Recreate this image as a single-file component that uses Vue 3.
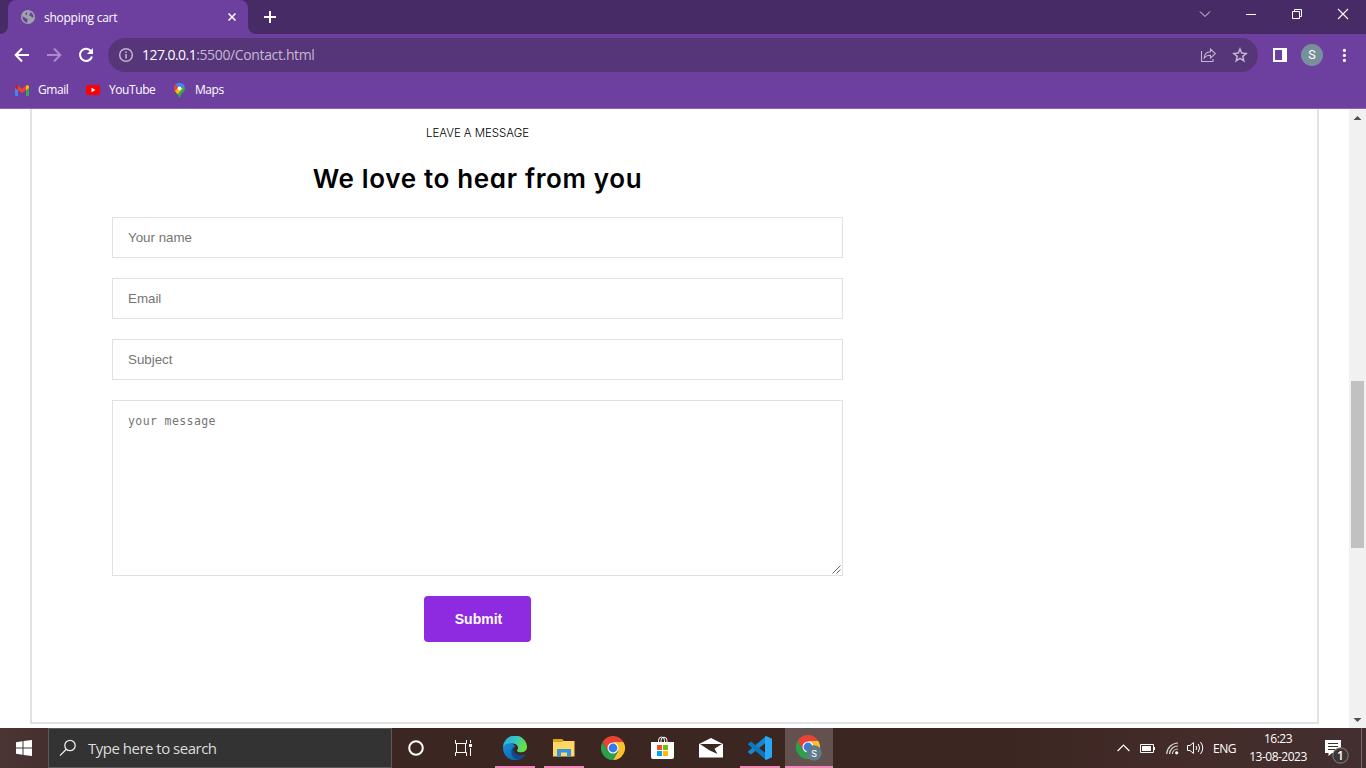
<script setup>
const fields = ['Your name', 'Email', 'Subject']
</script>

<template>
  <div class="screen">
    <header class="chrome">
      <div class="tabstrip">
        <div class="tab">
          <svg class="globe" width="14" height="14" viewBox="0 0 14 14">
            <circle cx="7" cy="7" r="7" fill="#9da4aa" />
            <path d="M1.5 6.2 5 8.2 6.6 9.3 6.2 12.6C3.4 12.2 1.2 9.6 1.5 6.2ZM6.6 1.6 9 1.4 9.8 2.6 8.6 4 8 5.4 9.8 6 11 7.6 12.6 7.2C12.6 4.6 11 2 8 1.4ZM4.2 3.4 6.2 2 6 4.4 5 5.6Z" fill="#6d40a0" />
          </svg>
          <span class="tab-title">shopping cart</span>
          <svg class="tab-close" width="8" height="8" viewBox="0 0 8 8"><path d="M.5.5 7.5 7.5M7.5.5.5 7.5" stroke="#fff" stroke-width="1.5" /></svg>
          <svg class="tab-foot" width="8" height="8" viewBox="0 0 8 8"><path d="M0 0A8 8 0 0 0 8 8H0Z" fill="#6d40a0" /></svg>
          <svg class="tab-foot left" width="8" height="8" viewBox="0 0 8 8"><path d="M8 0A8 8 0 0 1 0 8H8Z" fill="#6d40a0" /></svg>
        </div>
        <svg class="plus" width="12" height="12" viewBox="0 0 12 12"><path d="M6 0V12M0 6H12" stroke="#fff" stroke-width="2" /></svg>
        <div class="window-buttons">
          <svg width="46" height="28" viewBox="0 0 46 28"><path d="M18 11.5 23 16.5 28 11.5" fill="none" stroke="#e4deea" stroke-width="1" /></svg>
          <svg width="46" height="28" viewBox="0 0 46 28"><path d="M18 14.5H28" stroke="#fff" /></svg>
          <svg width="46" height="28" viewBox="0 0 46 28"><path d="M18.5 11.5H25.5V18.5H18.5ZM20.5 11.500V9.500H27.5V16.500H25.5" fill="none" stroke="#fff" /></svg>
          <svg width="46" height="28" viewBox="0 0 46 28"><path d="M18 9 28 19M28 9 18 19" stroke="#fff" stroke-width="1.1" /></svg>
        </div>
      </div>

      <div class="toolbar">
        <svg class="nav" width="16" height="16" viewBox="0 0 16 16"><path d="M15 8H2M8 1.500 1.700 8 8 14.500" fill="none" stroke="#fff" stroke-width="2" /></svg>
        <svg class="nav" width="16" height="16" viewBox="0 0 16 16"><path d="M1 8H14M8 1.500 14.300 8 8 14.500" fill="none" stroke="#a98bcb" stroke-width="2" /></svg>
        <svg class="nav" width="16" height="16" viewBox="0 0 16 16"><path d="M13.200 4.400A6.100 6.100 0 1 0 14 9.500" fill="none" stroke="#fff" stroke-width="2" /><path d="M15 1V7H9Z" fill="#fff" /></svg>
        <div class="omnibox">
          <svg width="16" height="16" viewBox="0 0 16 16"><circle cx="8" cy="8" r="6.300" fill="none" stroke="#c3b5d2" stroke-width="1.500" /><path d="M8 7V11.500M8 4.400V6" stroke="#c3b5d2" stroke-width="1.600" /></svg>
          <div class="url"><b>127.0.0.1</b>:5500/Contact.html</div>
          <svg class="share" width="16" height="16" viewBox="0 0 16 16"><path d="M1.500 4V14.500H13V12M4.200 11C4.500 7 6.500 5 10.500 4.800V2L15.300 6.600 10.500 11V8.300C7.500 8.200 5.700 9 4.200 11Z" fill="none" stroke="#c3b5d2" stroke-width="1.100" /></svg>
          <svg width="16" height="16" viewBox="0 0 16 16"><path d="M8 2 9.700 6.100 14.200 6.500 10.800 9.400 11.800 13.800 8 11.400 4.200 13.800 5.200 9.400 1.800 6.500 6.300 6.100Z" fill="none" stroke="#c3b5d2" stroke-width="1.500" /></svg>
        </div>
        <svg class="panel" width="14" height="14" viewBox="0 0 14 14"><path d="M0 0H14V14H0ZM2 2V12H9V2Z" fill="#fff" fill-rule="evenodd" /></svg>
        <div class="avatar">S</div>
        <svg class="more" width="4" height="14" viewBox="0 0 4 14"><circle cx="2.400" cy="2.400" r="1.600" fill="#fff" /><circle cx="2.400" cy="7.400" r="1.600" fill="#fff" /><circle cx="2.400" cy="12.400" r="1.600" fill="#fff" /></svg>
      </div>

      <nav class="bookmarks">
        <svg width="14" height="11" viewBox="0 0 14 11">
          <path d="M0 2H3V11H1Q0 11 0 10Z" fill="#4285f4" /><path d="M11 2H14V10Q14 11 13 11H11Z" fill="#34a853" />
          <path d="M0 3V1.600Q.700-.500 3 .600L3 5Z" fill="#c5221f" /><path d="M3 .600 7 3.700 11 .600V5L7 8 3 5Z" fill="#ea4335" /><path d="M11 .600Q13.500-.500 14 1.600V3L11 5Z" fill="#fbbc04" />
        </svg>
        <span class="gm">Gmail</span>
        <svg width="14" height="10" viewBox="0 0 14 10"><rect width="14" height="10" rx="2.200" fill="#f00" /><path d="M5.500 2.800 9.400 5 5.500 7.200Z" fill="#fff" /></svg>
        <span class="yt">YouTube</span>
        <svg width="11" height="15" viewBox="0 0 11 15">
          <clipPath id="pin"><path d="M5.500 0A5.400 5.400 0 0 0 0 5.400C0 8.500 3.800 9.500 4.800 14Q5.500 15.500 6.200 14C7.200 9.500 11 8.500 11 5.400A5.400 5.400 0 0 0 5.500 0Z" /></clipPath>
          <g clip-path="url(#pin)"><rect width="11" height="15" fill="#34a853" /><path d="M0 0H11V3L5 7 0 3Z" fill="#4285f4" /><path d="M0 0 5 5 0 10Z" fill="#ea4335" /><path d="M0 9 5 4 9 5 3 12Z" fill="#fbbc04" /><path d="M2 0H11V3L6 6Z" fill="#4285f4" /></g>
          <circle cx="5.500" cy="5.400" r="1.900" fill="#fff" />
        </svg>
        <span class="mp">Maps</span>
      </nav>
    </header>

    <div class="viewport">
      <main class="page">
        <section class="panel-box">
          <form class="form" @submit.prevent>
            <span class="eyebrow">LEAVE A MESSAGE</span>
            <h2>We love to hear from you</h2>
            <input v-for="f in fields" :key="f" type="text" :placeholder="f" />
            <div class="message">
              <span>your message</span>
              <svg width="9" height="9" viewBox="0 0 9 9"><path d="M.500 8.500 8.500.500M4.500 8.500 8.500 4.500" stroke="#555" stroke-width=".9" /></svg>
            </div>
            <button>Submit</button>
          </form>
        </section>
      </main>
      <aside class="scrollbar">
        <svg width="17" height="17" viewBox="0 0 17 17"><path d="M4.500 11 8.500 7 12.500 11Z" fill="#505050" /></svg>
        <div class="thumb"></div>
        <svg width="17" height="17" viewBox="0 0 17 17"><path d="M4.500 6 8.500 10 12.500 6Z" fill="#505050" /></svg>
      </aside>
    </div>

    <footer class="taskbar">
      <div class="start">
        <svg width="16" height="16" viewBox="0 0 16 16"><path d="M0 2.200 6.500 1.300V7.500H0ZM7.500 1.100 16 0V7.500H7.500ZM0 8.500H6.500V14.700L0 13.800ZM7.500 8.500H16V16L7.500 14.900Z" fill="#fff" /></svg>
      </div>
      <div class="search">
        <svg width="18" height="18" viewBox="0 0 18 18"><circle cx="11" cy="6.500" r="5.200" fill="none" stroke="#eee" stroke-width="1.300" /><path d="M7.300 10.300 1 16.600" stroke="#eee" stroke-width="1.300" /></svg>
        <span>Type here to search</span>
      </div>

      <div class="item"><svg width="16" height="16" viewBox="0 0 16 16"><circle cx="8" cy="8" r="6.800" fill="none" stroke="#fff" stroke-width="2" /></svg></div>
      <div class="item tasks"><svg width="17" height="16" viewBox="0 0 17 16"><path d="M.500 0V3.500H11.500V0M.500 16V12.500H11.500V16M1.500 4V12M10.500 4V12M15.500 0V3M15.500 8V16" fill="none" stroke="#fff" /><path d="M14 4H17V7H14Z" fill="#fff" /></svg></div>
      <div class="item open">
        <svg width="24" height="24" viewBox="0 0 24 24">
          <defs>
            <linearGradient id="ea" x1="0" y1="0" x2="1" y2=".3"><stop offset="0" stop-color="#2aa6df" /><stop offset=".5" stop-color="#32c4cd" /><stop offset="1" stop-color="#68df45" /></linearGradient>
            <linearGradient id="eb" x1="0" y1="0" x2="1" y2="1"><stop offset="0" stop-color="#1590d8" /><stop offset="1" stop-color="#0c59a4" /></linearGradient>
          </defs>
          <path d="M0 12A12 12 0 0 1 24 11C24 15 20.500 16.500 17 16.300 14 16.100 13.600 14.600 14.500 13.500 16 11.500 14.500 8 10 7.500 5 7.200 1.500 9 0 12Z" fill="url(#ea)" />
          <path d="M0 12C1 8.500 5.500 7 9.500 8 12.500 8.800 12 11 11 11.500 9.500 12.500 9.500 17 14 19 17 20.300 20 19.500 22.500 18A12 12 0 0 1 0 12Z" fill="url(#eb)" />
          <path d="M11 11C6.500 13 7.500 22 15 23.600 18.500 22.800 21 21 22.500 18 18 20.500 11 19 10.700 14Q10.600 12 11 11Z" fill="#114a8b" />
        </svg>
      </div>
      <div class="item open">
        <svg width="22" height="18" viewBox="0 0 22 18"><path d="M0 0H9L10.500 2H21.500V17.500H0Z" fill="#ffd765" /><path d="M0 0H9L10.500 2 9 3H0Z" fill="#e4a11b" /><path d="M4 17.500V10H18V17.500H14V13.500H8V17.500Z" fill="#3695dc" /></svg>
      </div>
      <div class="item">
        <svg width="24" height="24" viewBox="0 0 24 24"><path d="M1.600 6A12 12 0 0 1 22.400 6H12L6.800 15Z" fill="#ea4335" /><path d="M22.400 6A12 12 0 0 1 12 24L17.200 15 12 6Z" fill="#fbc02d" /><path d="M1.600 6 6.800 15H17.200L12 24A12 12 0 0 1 1.600 6Z" fill="#28a14a" /><circle cx="12" cy="12" r="5.500" fill="#fff" /><circle cx="12" cy="12" r="4.400" fill="#3b78e7" /></svg>
      </div>
      <div class="item">
        <svg width="23" height="24" viewBox="0 0 23 24"><path d="M7.500 7V4.500Q7.500 1 10.500 1Q13.500 1 13.500 4.500V7M10 7V4.500Q10 1.200 13 1.200Q16 1.200 16 4.500V7" fill="none" stroke="#fff" /><path d="M0 6H23V21Q23 23 21 23H2Q0 23 0 21Z" fill="#fff" /><path d="M6 9H11V14H6Z" fill="#f25022" /><path d="M12 9H17V14H12Z" fill="#7fba00" /><path d="M6 15H11V20H6Z" fill="#00a4ef" /><path d="M12 15H17V20H12Z" fill="#ffb900" /></svg>
      </div>
      <div class="item">
        <svg width="24" height="20" viewBox="0 0 24 20"><path d="M0 6 12 0 24 6V19.500H0Z" fill="#fff" /><path d="M1 6H23L15.500 10.700 18.500 16 10.300 12.300Z" fill="#3d2723" /></svg>
      </div>
      <div class="item open">
        <svg width="24" height="24" viewBox="0 0 24 24"><path d="M18 0V6.500L3 18.500 0 16.200V15.500Z" fill="#1688cf" /><path d="M18 24V17.500L3 5.500 0 7.800V8.500Z" fill="#0d77be" /><path d="M18 0 24 2.800V21.200L18 24 17 23V1Z" fill="#2aa7f2" /></svg>
      </div>
      <div class="item open active">
        <svg width="26" height="26" viewBox="0 0 26 26"><path d="M1.600 6A12 12 0 0 1 22.400 6H12L6.800 15Z" fill="#ea4335" /><path d="M22.400 6A12 12 0 0 1 12 24L17.200 15 12 6Z" fill="#fbc02d" /><path d="M1.600 6 6.800 15H17.200L12 24A12 12 0 0 1 1.600 6Z" fill="#28a14a" /><circle cx="12" cy="12" r="5.500" fill="#fff" /><circle cx="12" cy="12" r="4.400" fill="#3b78e7" /><circle cx="18" cy="18" r="7.700" fill="#607a87" /><text x="18" y="21.500" text-anchor="middle" font-family="Roboto, sans-serif" font-size="9.500" fill="#fff">S</text></svg>
      </div>

      <div class="tray">
        <svg width="13" height="8" viewBox="0 0 13 8"><path d="M.600 7 6.500 1.100 12.400 7" fill="none" stroke="#fff" stroke-width="1.200" /></svg>
        <svg class="battery" width="15" height="9" viewBox="0 0 15 9"><path d="M.500.500H13.500V8.500H.500ZM14.500 3V6" fill="none" stroke="#fff" /><path d="M2 2H11V7H2Z" fill="#fff" /></svg>
        <svg class="wifi" width="13" height="13" viewBox="0 0 13 13"><path d="M.700 12A11.500 11.500 0 0 1 12 1M3.500 12A8.500 8.500 0 0 1 12 4M6.300 12A5.600 5.600 0 0 1 12 7" fill="none" stroke="#d8d2d0" stroke-width="1.200" /><circle cx="10.700" cy="10.800" r="1.600" fill="#fff" /></svg>
        <svg class="volume" width="17" height="14" viewBox="0 0 17 14"><path d="M.500 4.500H3L6.500 1.500V12.500L3 9.500H.500Z" fill="none" stroke="#fff" /><path d="M9 5Q10.500 7 9 9M11.200 3Q14 7 11.200 11M13.500 1Q18 7 13.500 13" fill="none" stroke="#fff" /></svg>
        <span class="lang">ENG</span>
        <div class="clock"><span>16:23</span><span>13-08-2023</span></div>
        <div class="notice">
          <svg width="26" height="26" viewBox="0 0 26 26"><path d="M0 1H16V14H7L3.500 17V14H0Z" fill="#fff" /><path d="M3 4.500H13M3 7.500H13M3 10.500H10" stroke="#3e2c2b" /><circle cx="15.500" cy="16.500" r="7.700" fill="#3c3634" stroke="#8c8583" /><text x="15.500" y="20.700" text-anchor="middle" font-family="Open Sans, sans-serif" font-size="12" font-weight="600" fill="#fff">1</text></svg>
        </div>
      </div>
    </footer>
  </div>
</template>

<style>
body { margin: 0; overflow: hidden; }
</style>

<style scoped>
* { box-sizing: border-box; }
svg { display: block; flex: none; }
.screen { width: 1366px; height: 768px; display: flex; flex-direction: column; overflow: hidden; background: #fff; font-family: "Open Sans", "Noto Sans", sans-serif; }
.chrome { height: 109px; background: #6d40a0; border-bottom: 1px solid #8c67b4; color: #fff; }
.tabstrip { height: 34px; background: #472b66; display: flex; align-items: center; padding-left: 8px; }
.tab { position: relative; width: 240px; height: 34px; background: #6d40a0; border-radius: 8px 8px 0 0; display: flex; align-items: center; padding: 0 12px 0 13px; }
.tab-title { margin-left: 9px; flex: 1; font-size: 12px; letter-spacing: -.26px; white-space: nowrap; }
.tab-foot { position: absolute; right: -8px; bottom: 0; }
.tab-foot.left { right: auto; left: -8px; }
.plus { margin-left: 16px; }
.window-buttons { margin-left: auto; display: flex; height: 34px; }
.toolbar { height: 42px; display: flex; align-items: center; padding-left: 14px; }
.nav { margin-right: 16px; }
.omnibox { width: 1150px; height: 34px; margin-left: -2px; border-radius: 17px; background: #563578; display: flex; align-items: center; padding: 0 10px; }
.url { margin-left: 8px; flex: 1; font-size: 14px; letter-spacing: -.36px; color: #c6b7d5; white-space: nowrap; padding-bottom: 1px; }
.url b { font-weight: 400; color: #fff; letter-spacing: -.55px; }
.share { margin-right: 16px; }
.panel { margin-left: 15px; }
.avatar { width: 22px; height: 22px; margin-left: 14px; border-radius: 50%; background: #78909c; font: 400 12.5px/22px Roboto, sans-serif; text-align: center; }
.more { margin-left: 19px; }
.bookmarks { height: 28px; display: flex; align-items: center; padding-left: 15px; font-size: 12px; white-space: nowrap; }
.bookmarks span { padding-bottom: 1px; }
.gm { width: 48px; margin-left: 9px; letter-spacing: -.42px; }
.yt { width: 65px; margin-left: 9px; letter-spacing: -.42px; }
.mp { margin-left: 10px; letter-spacing: -.42px; }

.viewport { height: 619px; display: flex; }
.page { width: 1349px; padding: 0 30px; }
.panel-box { height: 615px; border: 2px solid #e1e1e1; border-top: 0; padding-left: 80px; }
.form { width: 731px; display: flex; flex-direction: column; align-items: center; }
.eyebrow { margin-top: 14px; font: 300 11.5px/20px Inter, sans-serif; color: #000; letter-spacing: -.05px; }
h2 { margin: 9px 0 11px; font: 600 26px/54px Inter, sans-serif; font-feature-settings: "cv11"; letter-spacing: .66px; color: #000; white-space: nowrap; }
input { width: 731px; height: 41px; margin: 0 0 20px; padding: 0 15px; border: 1px solid #e1e1e1; border-radius: 0; outline: none; background: #fff; font: 13.333px "Liberation Sans", Arial, sans-serif; }
input::placeholder { color: #757575; opacity: 1; }
.message { width: 731px; height: 176px; border: 1px solid #e1e1e1; display: flex; justify-content: space-between; padding: 12px 1px 1px 15px; font: 11.5px/17px "DejaVu Sans Mono", monospace; letter-spacing: .4px; color: #757575; }
.message svg { align-self: flex-end; }
button { width: 107px; height: 46px; margin-top: 20px; border: 0; border-radius: 4px; background: #8e2ae0; color: #fff; font: 700 14px "Liberation Sans", Arial, sans-serif; padding: 0 0 0 2px; }
.scrollbar { width: 17px; background: #f1f1f1; display: flex; flex-direction: column; }
.thumb { width: 13px; height: 167px; margin: 255px 2px 164px; background: #c1c1c1; flex: none; }

.taskbar { height: 40px; display: flex; color: #fff; background: linear-gradient(90deg, #4a3434 0, #45302f 48px, #3c2622 400px, #3c2622 1000px, #432c29 1200px, #432f31 1366px); }
.start { width: 48px; display: flex; align-items: center; justify-content: center; }
.search { width: 344px; border: 1px solid #5d5b5a; background: #333; display: flex; align-items: center; padding-left: 10px; color: #dcdcdc; font-size: 15px; }
.search span { margin-left: 11px; letter-spacing: -.5px; white-space: nowrap; }
.item { width: 40px; margin-right: 9px; display: flex; align-items: center; justify-content: center; }
.search + .item { margin-left: 4px; margin-right: 7px; }
.tasks { margin-right: 12px; }
.open { box-shadow: inset 0 -2px #f387b5; }
.active { width: 48px; margin-left: -4px; margin-right: 0; background-color: #635150; }
.tray { margin-left: auto; display: flex; align-items: center; font-size: 12px; }
.battery { margin-left: 10px; }
.wifi { margin-left: 11px; }
.volume { margin-left: 8px; }
.lang { width: 23px; margin-left: 9px; letter-spacing: -.5px; }
.clock { width: 60px; margin-left: 12px; display: flex; flex-direction: column; text-align: center; line-height: 18px; letter-spacing: -.5px; white-space: nowrap; }
.notice { width: 37px; height: 40px; margin-left: 17px; margin-right: 4px; padding-top: 11px; border-right: 1px solid #77696a; }
</style>
